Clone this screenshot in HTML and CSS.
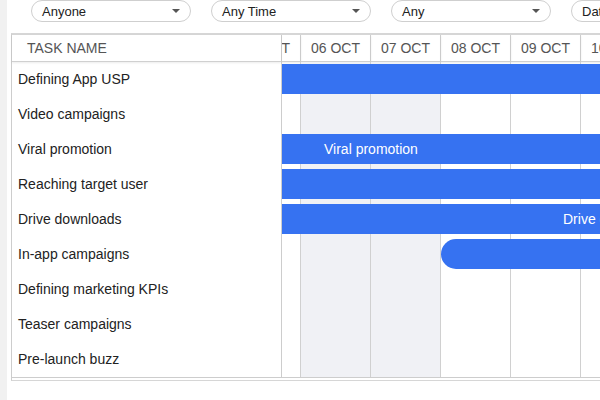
FILE: index.html
```html
<!DOCTYPE html>
<html lang="en">
<head>
    <meta charset="UTF-8">
    <meta name="viewport" content="width=device-width, initial-scale=1.0">
    <title>Campaign Timeline</title>
    <link rel="stylesheet" href="styles.css">
</head>
<body>
    <div class="app">
        <div class="rail"></div>
        <div class="main">
            <div class="filters">
                <div class="filter">Anyone <span class="caret"></span></div>
                <div class="filter">Any Time <span class="caret"></span></div>
                <div class="filter">Any <span class="caret"></span></div>
                <div class="filter">Date <span class="caret"></span></div>
            </div>

            <div class="gantt">
                <div class="task-panel">
                    <div class="task-head">TASK NAME</div>
                    <div class="task-row">Defining App USP</div>
                    <div class="task-row">Video campaigns</div>
                    <div class="task-row">Viral promotion</div>
                    <div class="task-row">Reaching target user</div>
                    <div class="task-row">Drive downloads</div>
                    <div class="task-row">In-app campaigns</div>
                    <div class="task-row">Defining marketing KPIs</div>
                    <div class="task-row">Teaser campaigns</div>
                    <div class="task-row">Pre-launch buzz</div>
                </div>

                <div class="timeline">
                    <div class="track">
                        <!-- date header -->
                        <div class="day-head" style="grid-column: 1">05 OCT</div>
                        <div class="day-head" style="grid-column: 2">06 OCT</div>
                        <div class="day-head" style="grid-column: 3">07 OCT</div>
                        <div class="day-head" style="grid-column: 4">08 OCT</div>
                        <div class="day-head" style="grid-column: 5">09 OCT</div>
                        <div class="day-head" style="grid-column: 6">10 OCT</div>
                        <div class="day-head" style="grid-column: 7">11 OCT</div>

                        <!-- day columns -->
                        <div class="day-col" style="grid-column: 1"></div>
                        <div class="day-col weekend" style="grid-column: 2"></div>
                        <div class="day-col weekend" style="grid-column: 3"></div>
                        <div class="day-col" style="grid-column: 4"></div>
                        <div class="day-col" style="grid-column: 5"></div>
                        <div class="day-col" style="grid-column: 6"></div>
                        <div class="day-col" style="grid-column: 7"></div>

                        <!-- bars -->
                        <div class="bar" style="grid-row: 2; grid-column: 1 / -1"></div>
                        <div class="bar label-early" style="grid-row: 4; grid-column: 1 / -1">Viral promotion</div>
                        <div class="bar" style="grid-row: 5; grid-column: 1 / -1"></div>
                        <div class="bar label-late" style="grid-row: 6; grid-column: 1 / -1">Drive downloads</div>
                        <div class="bar" style="grid-row: 7; grid-column: 4 / -1"></div>
                    </div>
                </div>
            </div>
            <div class="scroll-gap"></div>
        </div>
    </div>
</body>
</html>
```

FILE: styles.css
```css
body {
    font-family: 'Liberation Sans', Arial, sans-serif;
    margin: 0;
    background: #ffffff;
    color: #222222;
}

.app {
    display: flex;
    height: 400px;
    overflow: hidden;
}

.rail {
    width: 7px;
    flex-shrink: 0;
    background: #f1f1f1;
}

.main {
    flex: 1;
    min-width: 0;
    padding-left: 4px;
}

/* filters */

.filters {
    display: flex;
    gap: 20px;
    padding-left: 20px;
    height: 33px;
    overflow: hidden;
    white-space: nowrap;
}

.filter {
    flex-shrink: 0;
    width: 160px;
    height: 22px;
    box-sizing: border-box;
    border: 1px solid #cfcfcf;
    border-radius: 11px;
    display: flex;
    align-items: center;
    justify-content: space-between;
    padding: 0 10px 0 10px;
    font-size: 13px;
    color: #222222;
}

.caret {
    width: 0;
    height: 0;
    border-left: 4px solid transparent;
    border-right: 4px solid transparent;
    border-top: 4px solid #555555;
}

/* gantt */

.gantt {
    display: flex;
    border-top: 2px solid #d6d6d6;
    border-left: 1px solid #cdcdcd;
    border-bottom: 1px solid #cdcdcd;
}

.task-panel {
    width: 269px;
    flex-shrink: 0;
    border-right: 1px solid #cdcdcd;
}

.task-head {
    height: 26px;
    line-height: 26px;
    padding-left: 15px;
    font-size: 14px;
    color: #555555;
    border-bottom: 1px solid #d0d0d0;
    box-shadow: 0 1px 2px rgba(0, 0, 0, 0.08);
}

.task-row {
    height: 35px;
    line-height: 34px;
    padding-left: 6px;
    font-size: 14px;
    color: #222222;
    white-space: nowrap;
}

.timeline {
    flex: 1;
    min-width: 0;
    overflow: hidden;
}

.track {
    display: grid;
    grid-template-columns: repeat(7, 70px);
    grid-template-rows: 27px repeat(9, 35px);
    margin-left: -51px;
}

.day-head {
    grid-row: 1;
    height: 26px;
    line-height: 26px;
    text-align: center;
    font-size: 14px;
    color: #555555;
    border-right: 1px solid #d0d0d0;
    border-bottom: 1px solid #d0d0d0;
    box-shadow: 0 1px 2px rgba(0, 0, 0, 0.08);
}

.day-col {
    grid-row: 2 / -1;
    border-right: 1px solid #d0d0d0;
}

.weekend {
    background: #f0f1f5;
}

.bar {
    height: 30px;
    margin-top: 2px;
    margin-right: -200px;
    background: #3672f1;
    border-radius: 15px;
    color: #ffffff;
    font-size: 14px;
    line-height: 30px;
    white-space: nowrap;
}

.label-early {
    padding-left: 93px;
}

.label-late {
    padding-left: 332px;
}

.scroll-gap {
    height: 2px;
    border-left: 1px solid #cdcdcd;
    border-bottom: 1px solid #d6d6d6;
}
```
